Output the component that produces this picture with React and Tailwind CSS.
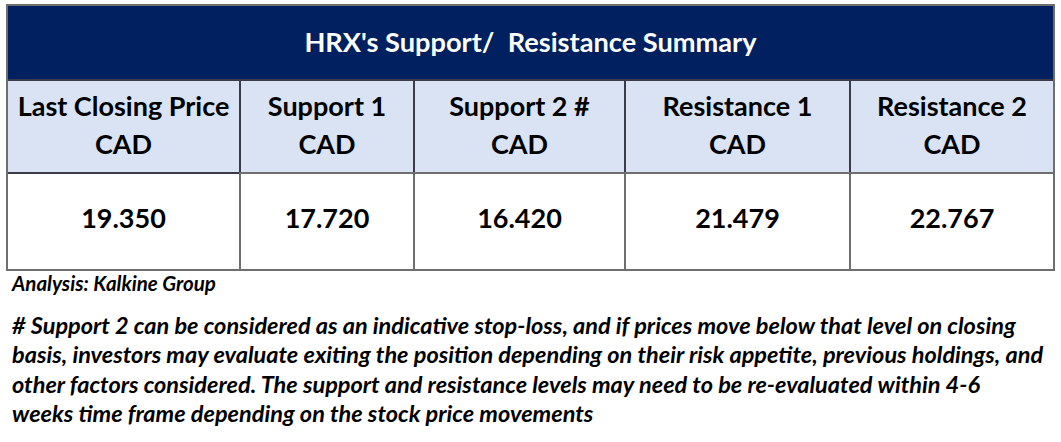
const cols = [
  { head: ["Last Closing Price", "CAD"], value: "19.350" },
  { head: ["Support 1", "CAD"], value: "17.720" },
  { head: ["Support 2 #", "CAD"], value: "16.420" },
  { head: ["Resistance 1", "CAD"], value: "21.479" },
  { head: ["Resistance 2", "CAD"], value: "22.767" },
];

export default function App() {
  return (
    <div className="w-[1061px] h-[442px] bg-white pt-[4px] pl-[6px] font-['Lato',sans-serif] text-black">
      <div className="w-[1049px] border-2 border-[#6e6e6e]">
        <div className="h-[73px] bg-[#002060] flex items-center justify-center text-white font-bold text-[27.2px] whitespace-pre">
          HRX's Support/  Resistance Summary
        </div>
        <div className="grid grid-cols-[231px_174px_211px_225px_1fr] border-t-2 border-[#3a3a4a]">
          {cols.map((c, i) => (
            <div
              key={c.value}
              className={`h-[91px] pb-[3px] bg-[#dae3f3] flex flex-col items-center justify-center font-bold text-[27px] leading-[38px] ${i > 0 ? "border-l-2 border-[#3a3a4a]" : ""}`}
            >
              <span>{c.head[0]}</span>
              <span>{c.head[1]}</span>
            </div>
          ))}
          {cols.map((c, i) => (
            <div
              key={c.value + "v"}
              className={`h-[97px] pb-[6px] bg-white flex items-center justify-center font-bold text-[27px] border-t-2 border-[#3a3a4a] ${i > 0 ? "border-l-2 border-[#6e6e6e]" : ""}`}
            >
              {c.value}
            </div>
          ))}
        </div>
      </div>
      <p className="mt-[0px] pl-[6px] font-bold italic text-[20.5px] leading-[24px]">Analysis: Kalkine Group</p>
      <p className="mt-[16px] pl-[6px] font-bold italic text-[23.5px] leading-[29.3px] whitespace-nowrap">
        # Support 2 can be considered as an indicative stop-loss, and if prices move below that level on closing
        <br />
        basis, investors may evaluate exiting the position depending on their risk appetite, previous holdings, and
        <br />
        other factors considered. The support and resistance levels may need to be re-evaluated within 4-6
        <br />
        weeks time frame depending on the stock price movements
      </p>
    </div>
  );
}
